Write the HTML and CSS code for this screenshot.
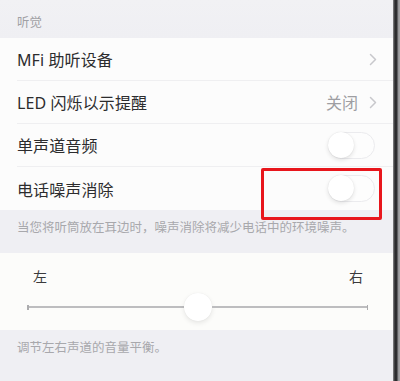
FILE: index.html
```html
<!DOCTYPE html>
<html lang="zh-CN">
<head>
<meta charset="utf-8">
<link rel="stylesheet" href="styles.css">
</head>
<body>
<div class="frame">
  <div class="screen">
    <div class="section-header">听觉</div>
    <div class="group">
      <div class="row">
        <span class="label">MFi 助听设备</span>
        <span class="accessory">
          <svg class="chevron" width="8" height="13" viewBox="0 0 8 13"><polyline points="1.5,1.5 6.5,6.5 1.5,11.5" fill="none" stroke="#c8c8cc" stroke-width="1.5" stroke-linecap="round" stroke-linejoin="round"/></svg>
        </span>
      </div>
      <div class="row">
        <span class="label">LED 闪烁以示提醒</span>
        <span class="accessory">
          <span class="value">关闭</span>
          <svg class="chevron" width="8" height="13" viewBox="0 0 8 13"><polyline points="1.5,1.5 6.5,6.5 1.5,11.5" fill="none" stroke="#c8c8cc" stroke-width="1.5" stroke-linecap="round" stroke-linejoin="round"/></svg>
        </span>
      </div>
      <div class="row">
        <span class="label">单声道音频</span>
        <span class="toggle"><span class="knob"></span></span>
      </div>
      <div class="row last">
        <span class="label">电话噪声消除</span>
        <span class="toggle"><span class="knob"></span></span>
      </div>
    </div>
    <div class="note">当您将听筒放在耳边时，噪声消除将减少电话中的环境噪声。</div>
    <div class="slider-group">
      <div class="slider-labels">
        <span>左</span>
        <span>右</span>
      </div>
      <div class="slider">
        <span class="tick"></span>
        <span class="track"></span>
        <span class="thumb"></span>
        <span class="track"></span>
        <span class="tick"></span>
      </div>
    </div>
    <div class="note bottom">调节左右声道的音量平衡。</div>
  </div>
  <div class="edge"></div>
  <div class="highlight"></div>
</div>
</body>
</html>
```

FILE: styles.css
```css
html, body {
  margin: 0;
  padding: 0;
  background: #efeff3;
}
body {
  width: 400px;
  height: 381px;
  overflow: hidden;
  font-family: "Noto Sans", "Noto Sans CJK SC", sans-serif;
}
.frame {
  position: relative;
  display: grid;
  grid-template-columns: 393px 7px;
  height: 381px;
}
.screen {
  display: flex;
  flex-direction: column;
  background: #efeff3;
}
.section-header {
  height: 38px;
  box-sizing: border-box;
  padding: 14px 0 0 17px;
  font-size: 12.4px;
  line-height: 18px;
  color: #a0a0a4;
  background: linear-gradient(#f1f1f4, #efeff3);
}
.group {
  background: #fcfcfc;
}
.row {
  height: 43px;
  display: flex;
  align-items: center;
  justify-content: space-between;
  margin-left: 17px;
  padding-right: 16px;
  border-bottom: 1px solid #efeff1;
  box-sizing: border-box;
}
.row.last {
  border-bottom: none;
}
.label {
  font-size: 16px;
  color: #2c2c2e;
  letter-spacing: 0.1px;
}
.accessory {
  display: flex;
  align-items: center;
  gap: 11px;
}
.value {
  font-size: 16px;
  color: #9e9ea2;
}
.chevron {
  display: block;
}
.toggle {
  width: 47px;
  height: 27px;
  box-sizing: border-box;
  border: 1.5px solid #ebebee;
  border-radius: 14px;
  background: #fdfdfd;
  margin-right: 2px;
  position: relative;
}
.knob {
  position: absolute;
  left: -1px;
  top: -1px;
  width: 26px;
  height: 26px;
  border-radius: 50%;
  background: #ffffff;
  box-shadow: 0 2px 4px rgba(0,0,0,0.11), 0 0 1px rgba(0,0,0,0.12);
}
.note {
  height: 43px;
  box-sizing: border-box;
  padding: 9px 0 0 17px;
  font-size: 12.5px;
  line-height: 18px;
  color: #a8a8ac;
}
.note.bottom {
  height: auto;
  flex: 1;
  padding-top: 9px;
}
.slider-group {
  height: 77px;
  background: #fcfcfa;
  display: flex;
  flex-direction: column;
}
.slider-labels {
  display: flex;
  justify-content: space-between;
  padding: 15px 30px 0 33px;
  font-size: 14px;
  line-height: 18px;
  color: #3a3a3c;
}
.slider {
  display: flex;
  align-items: center;
  margin: 7px 25px 0 27px;
  height: 28px;
}
.track {
  flex: 1;
  height: 1.5px;
  background: #bdbdbf;
}
.tick {
  width: 1.5px;
  height: 5px;
  background: #acacae;
}
.thumb {
  width: 28px;
  height: 28px;
  border-radius: 50%;
  background: #ffffff;
  box-shadow: 0 2px 5px rgba(0,0,0,0.09), 0 0 1px rgba(0,0,0,0.08);
}
.edge {
  background: linear-gradient(to right, #8a8a8c 0, #2a2a2c 2px, #303032 4px, #8f8f92 5px, #a8a8aa 7px);
}
.highlight {
  position: absolute;
  left: 261px;
  top: 168px;
  width: 121px;
  height: 52px;
  box-sizing: border-box;
  border: 3px solid #e8161c;
  border-radius: 2px;
}
```
